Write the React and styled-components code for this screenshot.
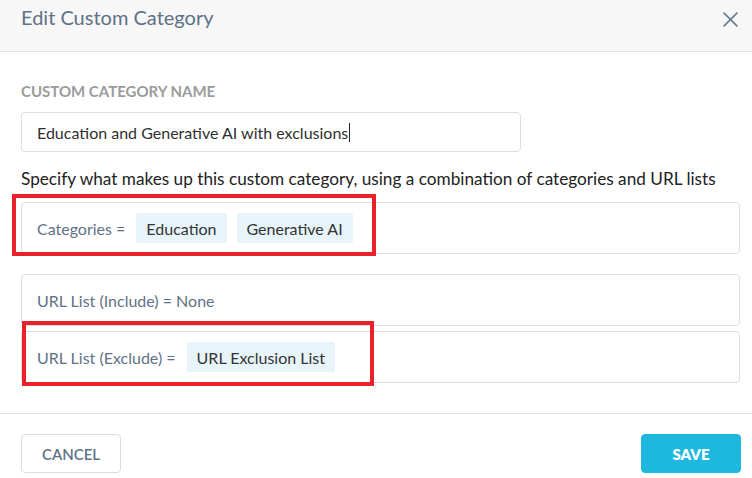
import React from "react";
import styled, { createGlobalStyle } from "styled-components";

const Global = createGlobalStyle`
  html, body { margin: 0; padding: 0; background: #fff; }
  body { font-family: Lato, "Open Sans", sans-serif; }
  * { box-sizing: border-box; }
`;

const Modal = styled.div`
  width: 752px;
  height: 478px;
  background: #fff;
  display: flex;
  flex-direction: column;
  position: relative;
  overflow: hidden;
`;

const Header = styled.div`
  height: 52px;
  background: #f7f7f7;
  border-bottom: 1px solid #e1e1e1;
  display: flex;
  align-items: flex-start;
  justify-content: space-between;
  padding: 4px 14px 0 21px;
`;

const Title = styled.h2`
  margin: 0;
  font-size: 20px;
  font-weight: 400;
  color: #5d7187;
  line-height: 26px;
`;

const Close = styled.button`
  border: 0;
  background: transparent;
  padding: 0;
  margin-top: 7px;
  width: 16px;
  height: 16px;
  display: flex;
  align-items: center;
  justify-content: center;
  cursor: pointer;
`;

const Body = styled.div`
  padding: 30px 12px 0 21px;
  display: flex;
  flex-direction: column;
  flex: 1;
`;

const Label = styled.div`
  font-size: 15px;
  font-weight: 700;
  color: #9b9b9b;
  line-height: 18px;
`;

const NameInput = styled.div`
  margin-top: 12px;
  width: 500px;
  height: 40px;
  border: 1px solid #dedede;
  border-radius: 4px;
  display: flex;
  align-items: center;
  padding-left: 15px;
  font-size: 16px;
  color: #2f2f2f;
`;

const Caret = styled.span`
  display: inline-block;
  width: 1px;
  height: 19px;
  background: #222;
  margin-left: 1px;
`;

const Hint = styled.p`
  margin: 16px 0 0;
  font-size: 17.2px;
  color: #222;
  line-height: 22px;
`;

const Rule = styled.div`
  margin-top: ${(p) => p.$top}px;
  height: 52px;
  border: 1px solid #dddddd;
  border-radius: 4px;
  display: flex;
  align-items: center;
  gap: 10px;
  padding-left: 15px;
  font-size: 16px;
  color: #5f7287;
  position: relative;
`;

const Chip = styled.span`
  height: 30px;
  padding: 0 10px;
  display: inline-flex;
  align-items: center;
  background: #e7f5fb;
  border-radius: 2px;
  color: #333;
  font-size: 16px;
`;

const RuleLabel = styled.span`
  margin-right: 1px;
`;

const Highlight = styled.div`
  position: absolute;
  border: 4px solid #e8212b;
  pointer-events: none;
  left: ${(p) => p.$l}px;
  top: ${(p) => p.$t}px;
  width: ${(p) => p.$w}px;
  height: ${(p) => p.$h}px;
`;

const Footer = styled.div`
  border-top: 1px solid #e1e1e1;
  height: 65px;
  display: flex;
  align-items: flex-start;
  justify-content: space-between;
  padding: 20px 11px 0 21px;
`;

const Button = styled.button`
  width: 100px;
  height: 39px;
  border-radius: 4px;
  font-family: Lato, sans-serif;
  font-size: 15px;
  font-weight: ${(p) => (p.$primary ? 800 : 600)};
  border: 1px solid ${(p) => (p.$primary ? "#1eb8df" : "#dcdcdc")};
  background: ${(p) => (p.$primary ? "#1eb8df" : "#fff")};
  color: ${(p) => (p.$primary ? "#fff" : "#5d7187")};
  cursor: pointer;
`;

export default function App() {
  return (
    <>
      <Global />
      <Modal>
        <Header>
          <Title>Edit Custom Category</Title>
          <Close aria-label="Close">
            <svg width="15" height="15" viewBox="0 0 15 15">
              <path d="M1 1 L14 14 M14 1 L1 14" stroke="#5d7187" strokeWidth="1.6" strokeLinecap="round" />
            </svg>
          </Close>
        </Header>
        <Body>
          <Label>CUSTOM CATEGORY NAME</Label>
          <NameInput>
            Education and Generative AI with exclusions
            <Caret />
          </NameInput>
          <Hint>Specify what makes up this custom category, using a combination of categories and URL lists</Hint>
          <Rule $top={12}>
            <RuleLabel>Categories =</RuleLabel>
            <Chip>Education</Chip>
            <Chip>Generative AI</Chip>
          </Rule>
          <Rule $top={20}>URL List (Include) = None</Rule>
          <Rule $top={5}>
            <RuleLabel>URL List (Exclude) =</RuleLabel>
            <Chip>URL Exclusion List</Chip>
          </Rule>
        </Body>
        <Footer>
          <Button>CANCEL</Button>
          <Button $primary>SAVE</Button>
        </Footer>
        <Highlight $l={12} $t={194} $w={364} $h={62} />
        <Highlight $l={22} $t={321} $w={352} $h={65} />
      </Modal>
    </>
  );
}
